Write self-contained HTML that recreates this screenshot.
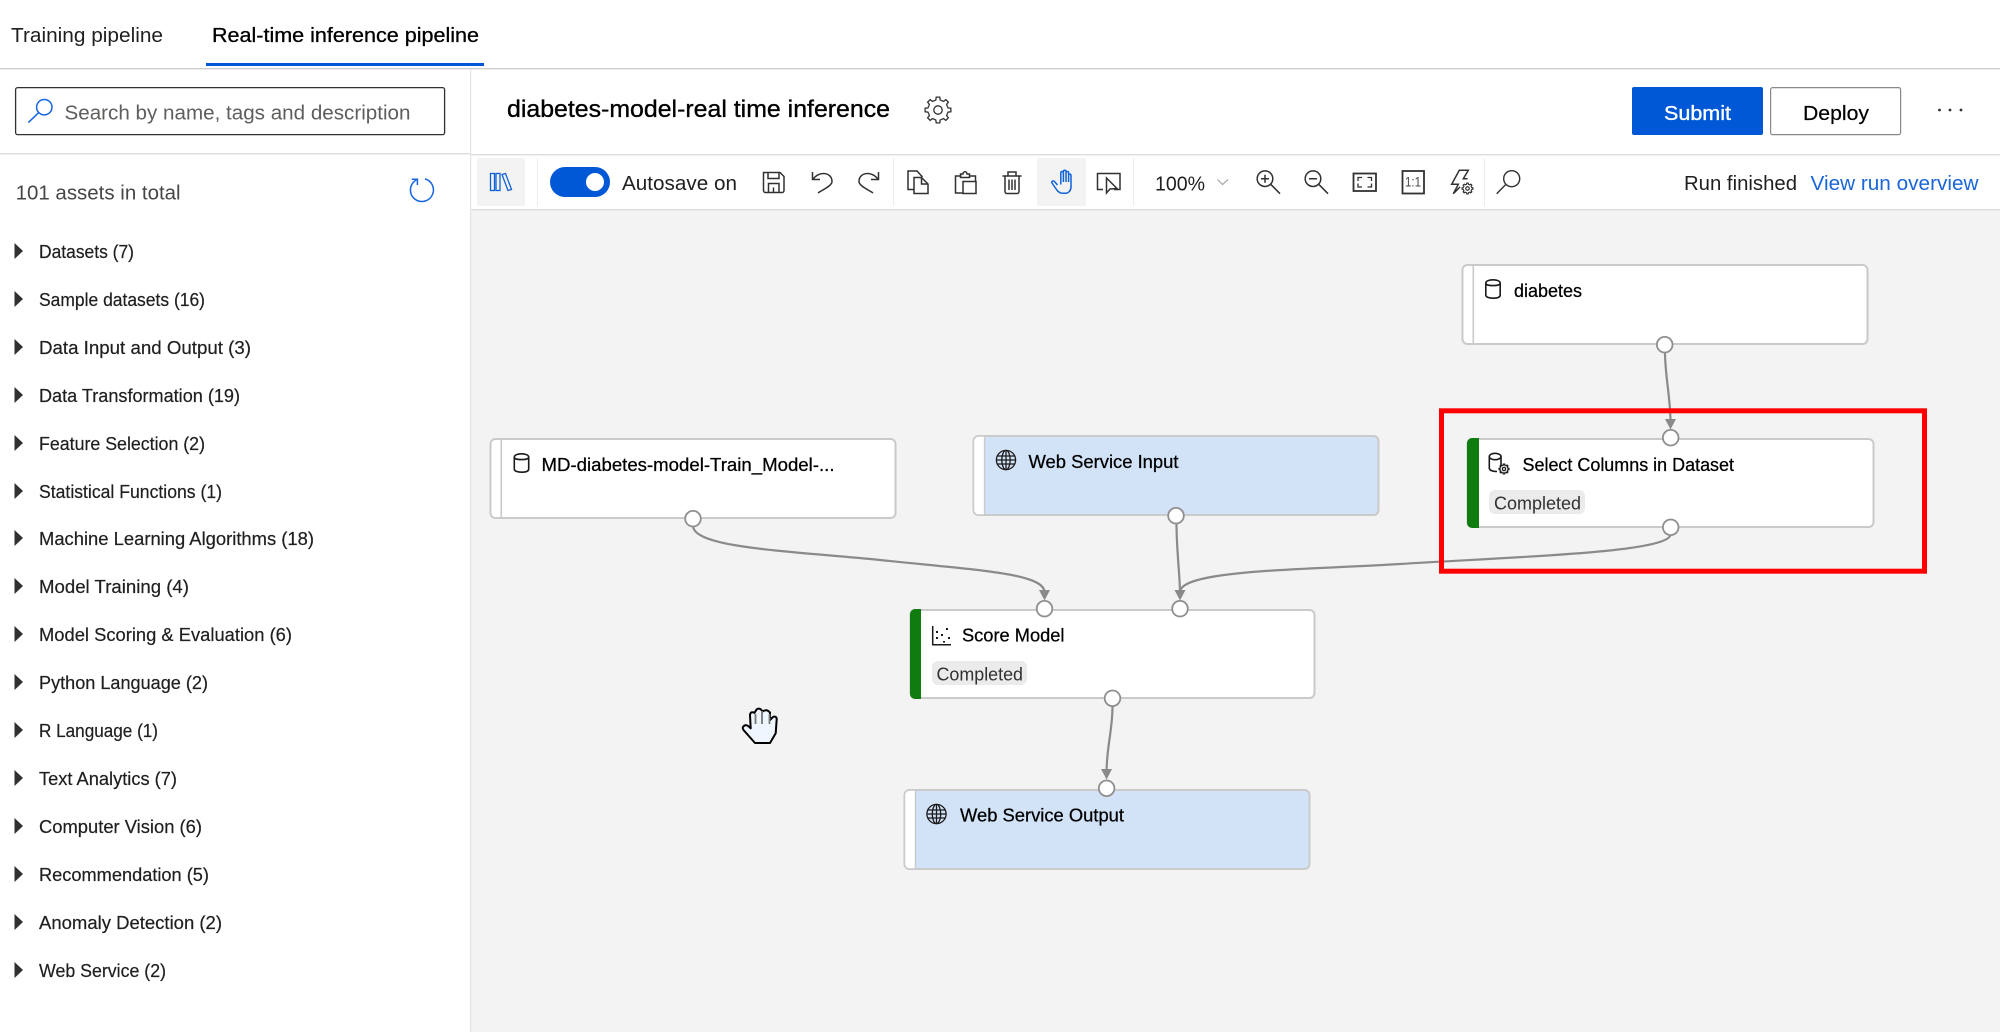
<!DOCTYPE html>
<html lang="en"><head><meta charset="utf-8"><title>Real-time inference pipeline</title>
<style>
html,body{margin:0;padding:0;background:#fff;width:2000px;height:1032px;overflow:hidden}
svg{display:block}
text{font-family:"Liberation Sans",sans-serif;white-space:pre}
.it{font-size:18px;fill:#201f1e;stroke:#201f1e;stroke-width:.2}
.nd{font-size:18px;fill:#000;stroke:#000;stroke-width:.25}
.pl{font-size:18px;fill:#323130}
.b{font-size:20px;fill:#201f1e}
.ic{fill:none;stroke:#323130;stroke-width:1.5}
.edge{fill:none;stroke:#8a8a8a;stroke-width:2.2}
.arr{fill:#8a8a8a}
.port{fill:#fff;stroke:#8f8f8f;stroke-width:1.8}
.node{stroke:#cacaca;stroke-width:2}
</style></head><body>
<svg width="2000" height="1032" viewBox="0 0 2000 1032" xmlns="http://www.w3.org/2000/svg">
<defs>
<path id="t" d="M-3.83 -9.24L-2.14 -10.07L-1.81 -12.87H1.81L2.14 -10.07L3.83 -9.24"/>
<g id="gear" fill="none"><use href="#t"/><use href="#t" transform="rotate(45)"/><use href="#t" transform="rotate(90)"/><use href="#t" transform="rotate(135)"/><use href="#t" transform="rotate(180)"/><use href="#t" transform="rotate(225)"/><use href="#t" transform="rotate(270)"/><use href="#t" transform="rotate(315)"/><circle r="4.2"/></g>
<g id="cyl" fill="none" stroke="#1a1a1a" stroke-width="1.6"><path d="M.8 4.2C.8 2 4 .8 8 .8S15.2 2 15.2 4.2V16C15.2 18.2 12 19.2 8 19.2S.8 18.2 .8 16Z"/><path d="M.8 4.2C.8 5.8 4 6.6 8 6.6S15.2 5.8 15.2 4.2"/></g>
<g id="globe" fill="none" stroke="#1a1a1a" stroke-width="1.3"><circle r="9.6"/><ellipse rx="4.2" ry="9.6"/><path d="M0 -9.6V9.6M-9.6 0H9.6M-8.6 -4H8.6M-8.6 4H8.6"/></g>
</defs>

<!-- canvas -->
<rect x="470" y="209" width="1530" height="823" fill="#f3f3f3"/>

<!-- tabs -->
<text x="11" y="42" font-size="20" fill="#201f1e" textLength="152" lengthAdjust="spacingAndGlyphs">Training pipeline</text>
<text x="212" y="42" font-size="20" fill="#000" stroke="#000" stroke-width=".3" textLength="267" lengthAdjust="spacingAndGlyphs">Real-time inference pipeline</text>
<rect x="206" y="63" width="278" height="3" fill="#0058d6"/>
<rect x="0" y="68" width="2000" height="1.4" fill="#cfcfcf"/>

<!-- structural lines -->
<rect x="470" y="69" width="1.2" height="963" fill="#e4e4e4"/>
<rect x="0" y="153" width="470" height="1.4" fill="#dcdcdc"/>
<rect x="471" y="154" width="1529" height="1.4" fill="#dcdcdc"/>
<rect x="471" y="209" width="1529" height="1.4" fill="#dcdcdc"/>

<!-- search -->
<rect x="15.6" y="87.6" width="429" height="47" rx="2" fill="#fff" stroke="#323130" stroke-width="1.3"/>
<circle cx="44.3" cy="107.2" r="7.7" fill="none" stroke="#1565e0" stroke-width="1.5"/>
<path d="M38.8 112.6L28.3 122.6" fill="none" stroke="#1565e0" stroke-width="1.5"/>
<text x="64.5" y="119.5" class="b" style="fill:#605e5c" textLength="346" lengthAdjust="spacingAndGlyphs">Search by name, tags and description</text>

<!-- assets -->
<text x="15.6" y="199.5" class="b" style="fill:#484644" textLength="165" lengthAdjust="spacingAndGlyphs">101 assets in total</text>
<path d="M425 178.9A11.5 11.5 0 1 1 413.2 182.5L417 179" fill="none" stroke="#1565e0" stroke-width="1.5"/>
<path d="M411.7 179.2H417.4V185" fill="none" stroke="#1565e0" stroke-width="1.5"/>

<!-- sidebar list -->
<g fill="#323130">
<path d="M14.5 243L23 251L14.5 259Z"/><path d="M14.5 291L23 299L14.5 307Z"/><path d="M14.5 339L23 347L14.5 355Z"/><path d="M14.5 387L23 395L14.5 403Z"/><path d="M14.5 435L23 443L14.5 451Z"/><path d="M14.5 483L23 491L14.5 499Z"/><path d="M14.5 530L23 538L14.5 546Z"/><path d="M14.5 578L23 586L14.5 594Z"/><path d="M14.5 626L23 634L14.5 642Z"/><path d="M14.5 674L23 682L14.5 690Z"/><path d="M14.5 722L23 730L14.5 738Z"/><path d="M14.5 770L23 778L14.5 786Z"/><path d="M14.5 818L23 826L14.5 834Z"/><path d="M14.5 866L23 874L14.5 882Z"/><path d="M14.5 914L23 922L14.5 930Z"/><path d="M14.5 962L23 970L14.5 978Z"/>
</g>
<text class="it" x="39" y="258" textLength="95" lengthAdjust="spacingAndGlyphs">Datasets (7)</text>
<text class="it" x="39" y="306" textLength="166" lengthAdjust="spacingAndGlyphs">Sample datasets (16)</text>
<text class="it" x="39" y="354" textLength="212" lengthAdjust="spacingAndGlyphs">Data Input and Output (3)</text>
<text class="it" x="39" y="402" textLength="201" lengthAdjust="spacingAndGlyphs">Data Transformation (19)</text>
<text class="it" x="39" y="450" textLength="166" lengthAdjust="spacingAndGlyphs">Feature Selection (2)</text>
<text class="it" x="39" y="498" textLength="183" lengthAdjust="spacingAndGlyphs">Statistical Functions (1)</text>
<text class="it" x="39" y="545" textLength="275" lengthAdjust="spacingAndGlyphs">Machine Learning Algorithms (18)</text>
<text class="it" x="39" y="593" textLength="150" lengthAdjust="spacingAndGlyphs">Model Training (4)</text>
<text class="it" x="39" y="641" textLength="253" lengthAdjust="spacingAndGlyphs">Model Scoring &amp; Evaluation (6)</text>
<text class="it" x="39" y="689" textLength="169" lengthAdjust="spacingAndGlyphs">Python Language (2)</text>
<text class="it" x="39" y="737" textLength="119" lengthAdjust="spacingAndGlyphs">R Language (1)</text>
<text class="it" x="39" y="785" textLength="138" lengthAdjust="spacingAndGlyphs">Text Analytics (7)</text>
<text class="it" x="39" y="833" textLength="163" lengthAdjust="spacingAndGlyphs">Computer Vision (6)</text>
<text class="it" x="39" y="881" textLength="170" lengthAdjust="spacingAndGlyphs">Recommendation (5)</text>
<text class="it" x="39" y="929" textLength="183" lengthAdjust="spacingAndGlyphs">Anomaly Detection (2)</text>
<text class="it" x="39" y="977" textLength="127" lengthAdjust="spacingAndGlyphs">Web Service (2)</text>

<!-- title row -->
<text x="507" y="117" font-size="24" fill="#000" stroke="#000" stroke-width=".35" textLength="383" lengthAdjust="spacingAndGlyphs">diabetes-model-real time inference</text>
<use href="#gear" transform="translate(938 110)" stroke="#323130" stroke-width="1.3"/>
<rect x="1632" y="87" width="131" height="48" rx="2" fill="#0058d6"/>
<text x="1664" y="120" font-size="20" fill="#fff" stroke="#fff" stroke-width=".35" textLength="67" lengthAdjust="spacingAndGlyphs">Submit</text>
<rect x="1770.6" y="87.6" width="130" height="47" rx="2" fill="#fff" stroke="#8a8886" stroke-width="1.2"/>
<text x="1803" y="120" font-size="20" fill="#000" stroke="#000" stroke-width=".2" textLength="66" lengthAdjust="spacingAndGlyphs">Deploy</text>
<circle cx="1939.5" cy="110" r="1.4" fill="#323130"/><circle cx="1950" cy="110" r="1.4" fill="#323130"/><circle cx="1961" cy="110" r="1.4" fill="#323130"/>

<!-- toolbar -->
<rect x="477" y="158" width="48" height="48" rx="2" fill="#f3f3f3"/>
<g fill="none" stroke="#0f62d8" stroke-width="1.3">
<rect x="490.5" y="173.5" width="4" height="17"/><rect x="496" y="173.5" width="4" height="17"/><path d="M502 174.5L505.5 173.5L511.5 189.5L508 190.5Z"/>
</g>
<rect x="537" y="158" width="1" height="48" fill="#ececec"/>
<rect x="550" y="167" width="60" height="30" rx="15" fill="#0058d6"/>
<circle cx="595" cy="182" r="9" fill="#fff"/>
<text x="622" y="190" class="b" textLength="115" lengthAdjust="spacingAndGlyphs">Autosave on</text>

<g class="ic">
<!-- save -->
<path d="M763.5 172.5H780L784 176.5V190.5A2 2 0 0 1 782 192.5H765.5A2 2 0 0 1 763.5 190.5Z"/>
<path d="M768 172.5V178.5H779V172.5M768.5 192.5V183.5H779V192.5M773.5 187.5V192.5"/>
<!-- undo -->
<path d="M812.5 172V179.5H820"/><path d="M813 179.5C818 171 832 171.5 832 181.5C832 186 822 190 818 193"/>
<!-- redo -->
<g transform="translate(1691 0) scale(-1 1)"><path d="M812.5 172V179.5H820"/><path d="M813 179.5C818 171 832 171.5 832 181.5C832 186 822 190 818 193"/></g>
<!-- copy -->
<path d="M914 189.5H908V171H917L922.5 177"/><path d="M914 177.5H921.5L928 184V193.5H914Z"/><path d="M921.5 177.5V184H928"/>
<!-- paste -->
<path d="M961.5 176H955.5V193H962.5M970 176H975.5V181.5"/><path d="M960.5 176.5V174H963C963 171 967 171 967 174H969.5V177.5H960.5Z"/><rect x="963" y="181.5" width="13" height="12"/>
<!-- delete -->
<path d="M1002.5 176H1021.5M1008 176V172H1016V176M1005 176V191.5A2 2 0 0 0 1007 193.5H1017A2 2 0 0 0 1019 191.5V176M1009 179.5V190M1012 179.5V190M1015 179.5V190"/>
</g>

<rect x="893" y="158" width="1" height="48" fill="#ececec"/>
<rect x="1037" y="158" width="49" height="48" rx="2" fill="#f3f3f3"/>
<path d="M1057.5 185L1054.5 181.5C1052.8 180 1051 181.5 1052.3 183.5L1056.5 189.5C1058 192 1060 193.3 1063 193.3H1065C1068.5 193.3 1071 190.5 1071 187V175.5C1071 173.7 1068.6 173.7 1068.6 175.5V182V172.8C1068.6 171 1066 171 1066 172.8V182V171.5C1066 169.8 1063.4 169.8 1063.4 171.5V182V172.8C1063.4 171 1060.8 171 1060.8 172.8V184.5" fill="none" stroke="#0f62d8" stroke-width="1.5"/>
<g class="ic">
<path d="M1103 189.5H1097.5V173.5H1120V189.5H1114"/><path d="M1106.5 178V193L1110 189L1117 188.5Z"/>
</g>
<rect x="1133" y="158" width="1" height="48" fill="#ececec"/>
<text x="1155" y="190.5" class="b" textLength="50" lengthAdjust="spacingAndGlyphs">100%</text>
<path d="M1217.5 179.5L1222.5 184.5L1228 179.5" fill="none" stroke="#a6a6a6" stroke-width="1.2"/>
<g class="ic">
<circle cx="1265" cy="178.7" r="7.8"/><path d="M1270.6 184.2L1280 193.7M1261 178.7H1269M1265 174.7V182.7"/>
<circle cx="1313" cy="178.7" r="7.8"/><path d="M1318.6 184.2L1328 193.7M1309 178.7H1317"/>
<rect x="1353.5" y="173.5" width="22.5" height="17.5" stroke-width="1.8"/><path d="M1358 181V177.5H1362M1367.5 177.5H1371.5V181M1371.5 183.5V187H1367.5M1362 187H1358V183.5" stroke-width="1.3"/>
<rect x="1402.5" y="171" width="21.5" height="22.5" stroke-width="1.8"/>
</g>
<text x="1405" y="186.5" font-size="14" fill="#484644" textLength="16" lengthAdjust="spacingAndGlyphs">1:1</text>
<path class="ic" d="M1467.5 178.7H1463.3L1468.3 170.3H1459.3L1451.7 184.3H1458.3L1453.3 193.7L1460 187" stroke-width="1.4"/>
<use href="#gear" transform="translate(1467.5 188.5) scale(.42)" stroke="#323130" stroke-width="2.8"/>
<rect x="1484" y="158" width="1" height="48" fill="#ececec"/>
<g class="ic" style="stroke-width:1.4"><circle cx="1511.7" cy="178.7" r="8"/><path d="M1505.5 184.8L1496.7 193.7"/></g>
<text x="1684" y="190" class="b" fill="#201f1e" textLength="113" lengthAdjust="spacingAndGlyphs">Run finished</text>
<text x="1810.5" y="190" font-size="20" fill="#1a66d8" textLength="168" lengthAdjust="spacingAndGlyphs">View run overview</text>

<!-- nodes -->
<g>
<rect class="node" x="1462.5" y="265" width="405" height="79" rx="5" fill="#fff"/>
<rect x="1472.5" y="265" width="1.6" height="79" fill="#cacaca"/>
<rect class="node" x="490.5" y="439" width="405" height="79" rx="5" fill="#fff"/>
<rect x="500.5" y="439" width="1.6" height="79" fill="#cacaca"/>
<rect class="node" x="973.5" y="436" width="405" height="79" rx="5" fill="#d2e2f7"/>
<path d="M984.5 436H978.5A5 5 0 0 0 973.5 441V510A5 5 0 0 0 978.5 515H984.5Z" fill="#fff" stroke="#cacaca" stroke-width="1.4"/>
<rect class="node" x="904.5" y="790" width="405" height="79" rx="5" fill="#d2e2f7"/>
<path d="M915.5 790H909.5A5 5 0 0 0 904.5 795V864A5 5 0 0 0 909.5 869H915.5Z" fill="#fff" stroke="#cacaca" stroke-width="1.4"/>
<rect class="node" x="1467.5" y="439" width="406" height="88" rx="5" fill="#fff"/>
<path d="M1479 438H1472A5 5 0 0 0 1467 443V523A5 5 0 0 0 1472 528H1479Z" fill="#107c10"/>
<rect class="node" x="910.5" y="610" width="404" height="88" rx="5" fill="#fff"/>
<path d="M921 609H915A5 5 0 0 0 910 614V694A5 5 0 0 0 915 699H921Z" fill="#107c10"/>
</g>

<!-- node content -->
<use href="#cyl" transform="translate(1485 279)"/>
<text class="nd" x="1514" y="297" textLength="68" lengthAdjust="spacingAndGlyphs">diabetes</text>

<use href="#cyl" transform="translate(513.5 453)"/>
<text class="nd" x="541.5" y="471" textLength="293" lengthAdjust="spacingAndGlyphs">MD-diabetes-model-Train_Model-...</text>

<use href="#globe" transform="translate(1006 460)"/>
<text class="nd" x="1028.5" y="468" textLength="150" lengthAdjust="spacingAndGlyphs">Web Service Input</text>

<use href="#globe" transform="translate(936.5 814)"/>
<text class="nd" x="960" y="821.5" textLength="164" lengthAdjust="spacingAndGlyphs">Web Service Output</text>

<path d="M1501 465V456.5C1501 454.6 1498 453.3 1495 453.3S1489.3 454.6 1489.3 456.5V468C1489.3 470 1492 471.5 1497 471.5" fill="none" stroke="#1a1a1a" stroke-width="1.6"/>
<path d="M1489.3 456.5C1489.3 458.5 1492 459.7 1495 459.7S1501 458.5 1501 456.5" fill="none" stroke="#1a1a1a" stroke-width="1.6"/>
<use href="#gear" transform="translate(1504 469) scale(.38)" stroke="#1a1a1a" stroke-width="3.4"/>
<text class="nd" x="1522.5" y="471" textLength="211.5" lengthAdjust="spacingAndGlyphs">Select Columns in Dataset</text>
<rect x="1489" y="490" width="96" height="24" rx="6" fill="#ebebeb"/>
<text class="pl" x="1494" y="509.5" textLength="87" lengthAdjust="spacingAndGlyphs">Completed</text>

<path d="M932.7 626V644.7H951" fill="none" stroke="#1a1a1a" stroke-width="1.5"/>
<g fill="#1a1a1a"><rect x="936" y="637" width="2" height="2"/><rect x="936" y="631" width="2" height="2"/><rect x="941" y="634" width="2" height="2"/><rect x="946" y="628" width="2" height="2"/><rect x="948" y="637" width="2" height="2"/><rect x="943" y="641" width="2" height="1.6"/></g>
<text class="nd" x="962" y="641.5" textLength="102.5" lengthAdjust="spacingAndGlyphs">Score Model</text>
<rect x="932" y="661" width="95" height="24" rx="6" fill="#ebebeb"/>
<text class="pl" x="936.5" y="680.5" textLength="86.5" lengthAdjust="spacingAndGlyphs">Completed</text>

<!-- edges -->
<path class="edge" d="M1665 352C1665 375 1670 395 1670.5 420"/>
<path class="arr" d="M1665 419H1676L1670.5 429.5Z"/>
<path class="edge" d="M693 526C694 548 790 551 880 560C975 570 1044 573 1044.5 592"/>
<path class="arr" d="M1039 590H1050L1044.5 600.5Z"/>
<path class="edge" d="M1176.5 523C1176.5 550 1179.5 570 1180 592"/>
<path class="edge" d="M1670.5 535C1666 553 1510 557 1400 564C1300 570 1181 570 1180 592"/>
<path class="arr" d="M1174.5 590H1185.5L1180 600.5Z"/>
<path class="edge" d="M1112.5 706C1112.5 730 1107 745 1106.6 770"/>
<path class="arr" d="M1101 769H1112L1106.6 779.5Z"/>

<!-- ports -->
<circle class="port" cx="1664.7" cy="344.7" r="7.8"/>
<circle class="port" cx="1670.7" cy="437.7" r="7.8"/>
<circle class="port" cx="1670.7" cy="527.3" r="7.8"/>
<circle class="port" cx="693" cy="518.7" r="7.8"/>
<circle class="port" cx="1176" cy="515.7" r="7.8"/>
<circle class="port" cx="1044.5" cy="608.7" r="7.8"/>
<circle class="port" cx="1180" cy="608.7" r="7.8"/>
<circle class="port" cx="1112.5" cy="698.3" r="7.8"/>
<circle class="port" cx="1106.6" cy="788.3" r="7.8"/>

<!-- highlight -->
<rect x="1441.5" y="410.8" width="483" height="160.4" fill="none" stroke="#f00" stroke-width="5"/>

<!-- cursor -->
<path d="M743.5 730Q741.5 727 745 725.3Q747 724.5 750.7 728.3L750 715Q750.5 711 754.5 712.8L756.7 709.3Q760 707.3 762.5 711.5Q767 708.5 770 712.7L770 720L773.3 716.7Q776.5 716 776.7 719L775.7 733.3L770 743H755Z" fill="#f0f6ff" stroke="#000" stroke-width="2" stroke-linejoin="round"/>
<path d="M755.5 714V724M762 711V724M769.5 714V724" fill="none" stroke="#777" stroke-width="1.8"/>
</svg>
</body></html>
